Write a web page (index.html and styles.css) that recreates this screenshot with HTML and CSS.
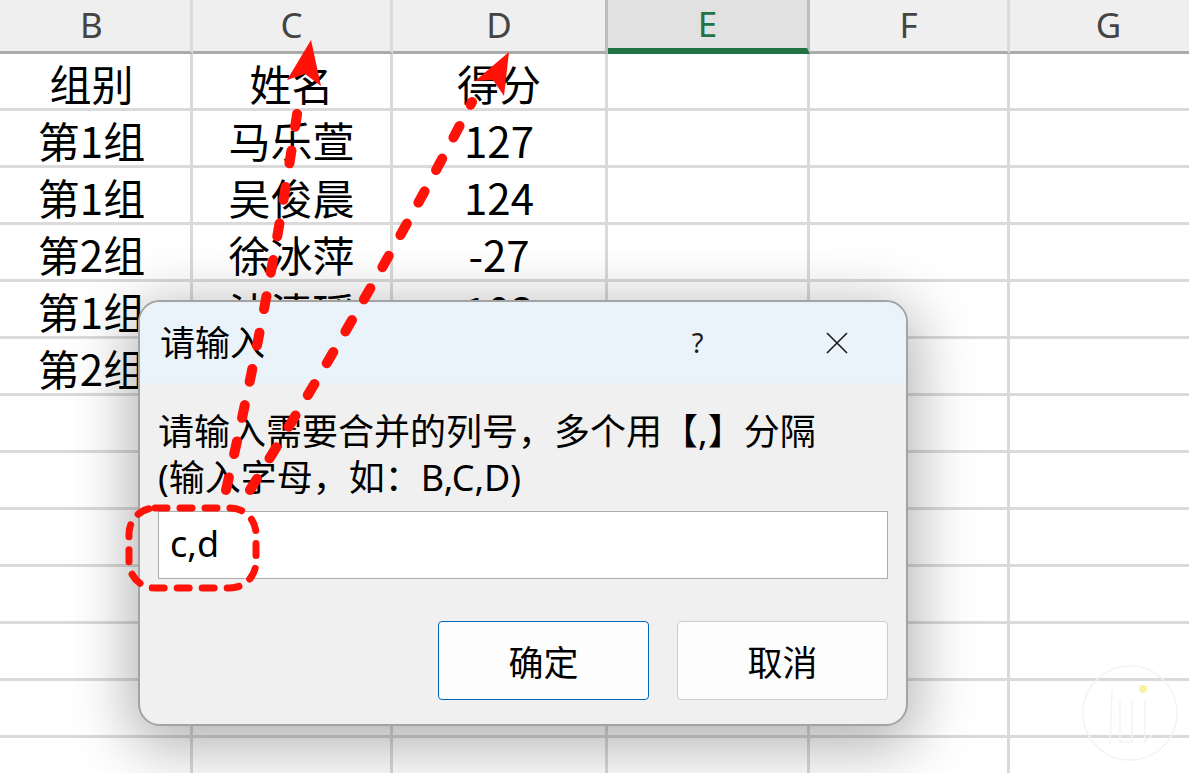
FILE: index.html
```html
<!DOCTYPE html>
<html lang="zh-CN">
<head>
    <meta charset="UTF-8">
    <title>请输入</title>
    <link rel="stylesheet" href="styles.css">
</head>
<body>
    <div class="sheet">
        <div class="row head">
            <div class="c">B</div><div class="c">C</div><div class="c wide edge">D</div><div class="c sel edge">E</div><div class="c">F</div><div class="c">G</div>
        </div>
        <div class="row"><div class="c">组别</div><div class="c">姓名</div><div class="c wide">得分</div><div class="c"></div><div class="c"></div><div class="c"></div></div>
        <div class="row"><div class="c">第1组</div><div class="c">马乐萱</div><div class="c wide">127</div><div class="c"></div><div class="c"></div><div class="c"></div></div>
        <div class="row"><div class="c">第1组</div><div class="c">吴俊晨</div><div class="c wide">124</div><div class="c"></div><div class="c"></div><div class="c"></div></div>
        <div class="row"><div class="c">第2组</div><div class="c">徐冰萍</div><div class="c wide">-27</div><div class="c"></div><div class="c"></div><div class="c"></div></div>
        <div class="row"><div class="c">第1组</div><div class="c">沈清瑶</div><div class="c wide">103</div><div class="c"></div><div class="c"></div><div class="c"></div></div>
        <div class="row"><div class="c">第2组</div><div class="c"></div><div class="c wide"></div><div class="c"></div><div class="c"></div><div class="c"></div></div>
        <div class="row"><div class="c"></div><div class="c"></div><div class="c wide"></div><div class="c"></div><div class="c"></div><div class="c"></div></div>
        <div class="row"><div class="c"></div><div class="c"></div><div class="c wide"></div><div class="c"></div><div class="c"></div><div class="c"></div></div>
        <div class="row"><div class="c"></div><div class="c"></div><div class="c wide"></div><div class="c"></div><div class="c"></div><div class="c"></div></div>
        <div class="row"><div class="c"></div><div class="c"></div><div class="c wide"></div><div class="c"></div><div class="c"></div><div class="c"></div></div>
        <div class="row"><div class="c"></div><div class="c"></div><div class="c wide"></div><div class="c"></div><div class="c"></div><div class="c"></div></div>
        <div class="row"><div class="c"></div><div class="c"></div><div class="c wide"></div><div class="c"></div><div class="c"></div><div class="c"></div></div>
        <div class="row"><div class="c"></div><div class="c"></div><div class="c wide"></div><div class="c"></div><div class="c"></div><div class="c"></div></div>
    </div>

    <div class="dialog">
        <div class="titlebar">
            <span class="title">请输入</span>
            <span class="tbtn help">?</span>
            <span class="tbtn">
                <svg width="22" height="22" viewBox="0 0 22 22"><path d="M1 1 L21 21 M21 1 L1 21" stroke="#1a1a1a" stroke-width="1.6" fill="none"/></svg>
            </span>
        </div>
        <div class="content">
            <p class="msg">请输入需要合并的列号，多个用【,】分隔<br>(输入字母，如：B,C,D)</p>
            <div class="field">c,d</div>
            <div class="actions">
                <button class="btn primary">确定</button>
                <button class="btn">取消</button>
            </div>
        </div>
    </div>

    <svg class="marks" width="1189" height="773" viewBox="0 0 1189 773">
        <g fill="none" stroke="#ff1208" stroke-linecap="round">
            <path d="M226 490 Q270 300 300 94" stroke-width="10" stroke-dasharray="13 24"/>
            <path d="M250 490 Q380 280 472 102" stroke-width="10" stroke-dasharray="13 24"/>
            <rect x="129" y="508" width="127" height="80" rx="26" stroke-width="7" stroke-dasharray="12 13"/>
        </g>
        <g fill="#ff1208">
            <polygon points="311,40 321,86 305,74 287,80"/>
            <polygon points="509,52 504,96 493,80 475,81"/>
        </g>
        <g fill="none" stroke="#f3f3f3" stroke-width="1.5">
            <circle cx="1130" cy="713" r="47"/>
            <path d="M1112 690 L1110 745 M1120 700 L1120 742 L1132 742 L1132 700 M1145 700 L1145 742 L1152 735"/>
        </g>
        <circle cx="1143" cy="689" r="4" fill="#f6f3a0"/>
    </svg>
</body>
</html>
```

FILE: styles.css
```css
body{
    margin: 0;
    width: 1189px;
    height: 773px;
    overflow: hidden;
    background: #fff;
    position: relative;
}

.sheet{
    margin-left: -7px;
    font-family: "Noto Sans CJK SC", sans-serif;
    font-size: 42px;
    color: #000;
}
.row{
    display: flex;
    height: 57px;
}
.c{
    box-sizing: border-box;
    width: 200px;
    flex: none;
    border-right: 3px solid #dadada;
    border-bottom: 3px solid #dadada;
    display: flex;
    align-items: flex-end;
    justify-content: center;
    line-height: 50px;
    white-space: nowrap;
}
.c.wide{
    width: 215px;
}
.row .c:nth-child(4){
    width: 202px;
}

.head{
    height: 54px;
}
.head .c{
    background: #efefef;
    border-bottom-color: #ababab;
    align-items: center;
    font-family: "Noto Sans", sans-serif;
    font-size: 35px;
    color: #444;
    padding-bottom: 2px;
}
.head .c.edge{
    border-right-color: #bdbdbd;
}
.head .c.sel{
    background: #e1e1e1;
    color: #217346;
    border-bottom: 6px solid #217346;
    padding-bottom: 0;
}

.dialog{
    position: absolute;
    left: 138px;
    top: 300px;
    width: 770px;
    box-sizing: border-box;
    border: 2px solid #a3a3a3;
    border-radius: 22px;
    background: #f0f0f0;
    overflow: hidden;
    box-shadow: 0 14px 60px 8px rgba(0,0,0,0.3);
    font-family: "Noto Sans", "Noto Sans CJK SC", sans-serif;
    color: #000;
    z-index: 2;
}
.titlebar{
    height: 81px;
    background: #ebf3fa;
    display: flex;
    align-items: center;
}
.title{
    flex: 1;
    padding-left: 20px;
    font-size: 35px;
    padding-bottom: 4px;
}
.tbtn{
    width: 139px;
    height: 81px;
    display: flex;
    align-items: center;
    justify-content: center;
}
.help{
    font-size: 27px;
    color: #1a1a1a;
}

.content{
    padding: 26px 18px 24px 18px;
}
.msg{
    margin: 0;
    font-size: 36px;
    line-height: 46px;
}
.field{
    margin-top: 10px;
    height: 68px;
    box-sizing: border-box;
    border: 1px solid #acacac;
    background: #fff;
    font-size: 36px;
    line-height: 64px;
    padding-left: 11px;
}
.actions{
    margin-top: 42px;
    display: flex;
    justify-content: flex-end;
    gap: 28px;
}
.btn{
    width: 211px;
    height: 79px;
    box-sizing: border-box;
    border: 1px solid #cccccc;
    border-radius: 4px;
    background: #fdfdfd;
    font-family: "Noto Sans CJK SC", sans-serif;
    font-size: 35px;
    color: #000;
    padding: 0;
}
.btn.primary{
    border-color: #0067c0;
}

.marks{
    position: absolute;
    left: 0;
    top: 0;
    z-index: 3;
    pointer-events: none;
}
```
